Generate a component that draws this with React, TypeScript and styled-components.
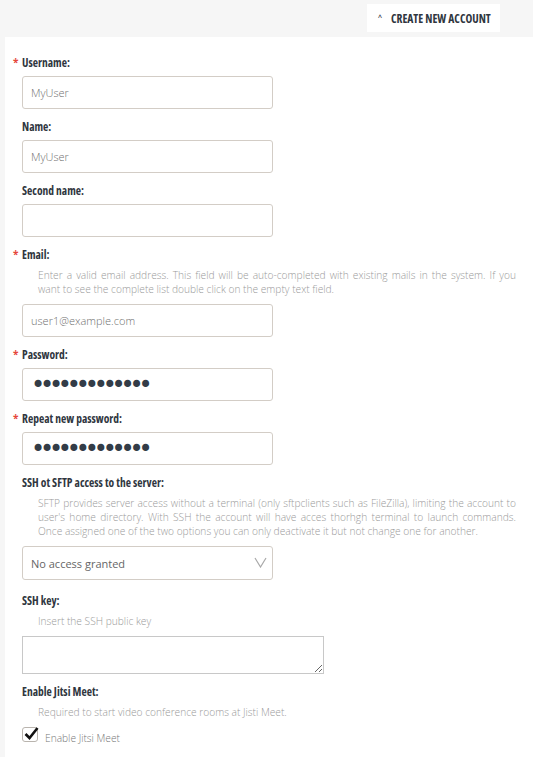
import styled, { createGlobalStyle } from 'styled-components';

const GlobalStyle = createGlobalStyle`
	body {
		margin: 0;
		background: #f6f6f6;
		font-family: 'Open Sans', 'Liberation Sans', sans-serif;
	}
`;

const Page = styled.div`
	display: flex;
	flex-direction: column;
	min-height: 757px;
`;

const TopBar = styled.div`
	display: flex;
	justify-content: flex-end;
	height: 37px;
	box-sizing: border-box;
	padding: 4px 33px 0 0;
`;

const ToggleButton = styled.button`
	display: flex;
	align-items: center;
	gap: 9px;
	height: 28px;
	width: 133px;
	padding: 0 0 0 11px;
	border: none;
	background: #fff;
	color: #2f3640;
	font-family: 'Open Sans', sans-serif;
	font-stretch: 75%;
	font-weight: bold;
	font-size: 11.5px;
	white-space: nowrap;
	cursor: pointer;
	.caret {
		font-size: 9px;
		font-weight: normal;
		margin-top: -2px;
	}
`;

const Panel = styled.form`
	flex: 1;
	margin-left: 5px;
	background: #fff;
	padding: 18px 17px 16px 17px;
	display: flex;
	flex-direction: column;
`;

const Field = styled.div<{ $gapAfter?: number }>`
	display: flex;
	flex-direction: column;
	align-items: flex-start;
	margin-bottom: ${({ $gapAfter }) => $gapAfter ?? 10}px;
`;

const Label = styled.label`
	display: flex;
	align-items: center;
	height: 14px;
	font-family: 'Open Sans', sans-serif;
	font-stretch: 75%;
	font-weight: bold;
	font-size: 11.5px;
	color: #2f3640;
	margin-bottom: 7px;
`;

const Required = styled.span`
	width: 9px;
	margin-left: -9px;
	color: #e5473b;
	font-size: 10px;
	font-stretch: 100%;
`;

const Help = styled.p`
	margin: 0 0 8px 16px;
	align-self: stretch;
	font-family: 'Open Sans', sans-serif;
	font-weight: 300;
	font-size: 10.2px;
	line-height: 14px;
	color: #9a9a9a;
	text-align: justify;
`;

const TextInput = styled.input<{ $secret?: boolean }>`
	box-sizing: border-box;
	width: 251px;
	height: 33px;
	padding: 0 8px;
	border: 1px solid #d3cdc6;
	border-radius: 3px;
	background: #fff;
	outline: none;
	font-family: ${({ $secret }) => ($secret ? "'DejaVu Sans', sans-serif" : "'Open Sans', sans-serif")};
	font-weight: ${({ $secret }) => ($secret ? 'normal' : '300')};
	font-size: ${({ $secret }) => ($secret ? '24px' : '11px')};
	color: ${({ $secret }) => ($secret ? '#333c47' : '#707070')};
	letter-spacing: ${({ $secret }) => ($secret ? '-5.2px' : '0')};
`;

const SelectBox = styled.div`
	position: relative;
	width: 251px;
	height: 34px;
	select {
		box-sizing: border-box;
		width: 100%;
		height: 100%;
		appearance: none;
		padding: 0 8px;
		border: 1px solid #d3cdc6;
		border-radius: 3px;
		background: #fff;
		font-family: 'Open Sans', sans-serif;
		font-size: 11px;
		color: #666;
		outline: none;
	}
	svg {
		position: absolute;
		right: 6px;
		top: 11px;
		pointer-events: none;
	}
`;

const KeyArea = styled.textarea`
	box-sizing: border-box;
	width: 302px;
	height: 38px;
	border: 1px solid #c8c8c8;
	border-radius: 0;
	outline: none;
`;

const CheckRow = styled.label`
	display: flex;
	align-items: flex-start;
	gap: 7px;
	font-family: 'Open Sans', sans-serif;
	font-weight: 300;
	font-size: 10.2px;
	line-height: 14px;
	color: #777;
	.text {
		padding-top: 4px;
	}
`;

const CheckBox = styled.span`
	position: relative;
	box-sizing: border-box;
	width: 16px;
	height: 15px;
	border: 1px solid #b9b4ae;
	border-radius: 3px;
	background: #fff;
	svg {
		position: absolute;
		left: 1px;
		top: -2px;
	}
`;

const Chevron = () => (
	<svg width="13" height="11" viewBox="0 0 13 11">
		<path d="M1 1 L6.5 10 L12 1" fill="none" stroke="#a9a9a9" strokeWidth="1.2" />
	</svg>
);

const Tick = () => (
	<svg width="15" height="14" viewBox="0 0 15 14">
		<path d="M1.5 8 L5.5 12 L13.5 2" fill="none" stroke="#111" strokeWidth="2.6" />
	</svg>
);

const App = () => {
	return (
		<Page>
			<GlobalStyle />
			<TopBar>
				<ToggleButton type="button">
					<span className="caret">^</span>
					CREATE NEW ACCOUNT
				</ToggleButton>
			</TopBar>
			<Panel onSubmit={(e) => e.preventDefault()}>
				<Field>
					<Label>
						<Required>*</Required>Username:
					</Label>
					<TextInput defaultValue="MyUser" />
				</Field>
				<Field>
					<Label>Name:</Label>
					<TextInput defaultValue="MyUser" />
				</Field>
				<Field>
					<Label>Second name:</Label>
					<TextInput />
				</Field>
				<Field>
					<Label>
						<Required>*</Required>Email:
					</Label>
					<Help>
						Enter a valid email address. This field will be auto-completed with existing mails in the system. If you
						want to see the complete list double click on the empty text field.
					</Help>
					<TextInput defaultValue="user1@example.com" />
				</Field>
				<Field>
					<Label>
						<Required>*</Required>Password:
					</Label>
					<TextInput $secret type="password" defaultValue="MyPassword123" />
				</Field>
				<Field>
					<Label>
						<Required>*</Required>Repeat new password:
					</Label>
					<TextInput $secret type="password" defaultValue="MyPassword123" />
				</Field>
				<Field $gapAfter={13}>
					<Label>SSH ot SFTP access to the server:</Label>
					<Help>
						SFTP provides server access without a terminal (only sftpclients such as FileZilla), limiting the account to
						user's home directory. With SSH the account will have acces thorhgh terminal to launch commands. Once
						assigned one of the two options you can only deactivate it but not change one for another.
					</Help>
					<SelectBox>
						<select defaultValue="none">
							<option value="none">No access granted</option>
							<option value="sftp">SFTP</option>
							<option value="ssh">SSH</option>
						</select>
						<Chevron />
					</SelectBox>
				</Field>
				<Field>
					<Label>SSH key:</Label>
					<Help>Insert the SSH public key</Help>
					<KeyArea />
				</Field>
				<Field>
					<Label>Enable Jitsi Meet:</Label>
					<Help>Required to start video conference rooms at Jisti Meet.</Help>
					<CheckRow>
						<CheckBox>
							<Tick />
						</CheckBox>
						<span className="text">Enable Jitsi Meet</span>
					</CheckRow>
				</Field>
			</Panel>
		</Page>
	);
};

export default App;
